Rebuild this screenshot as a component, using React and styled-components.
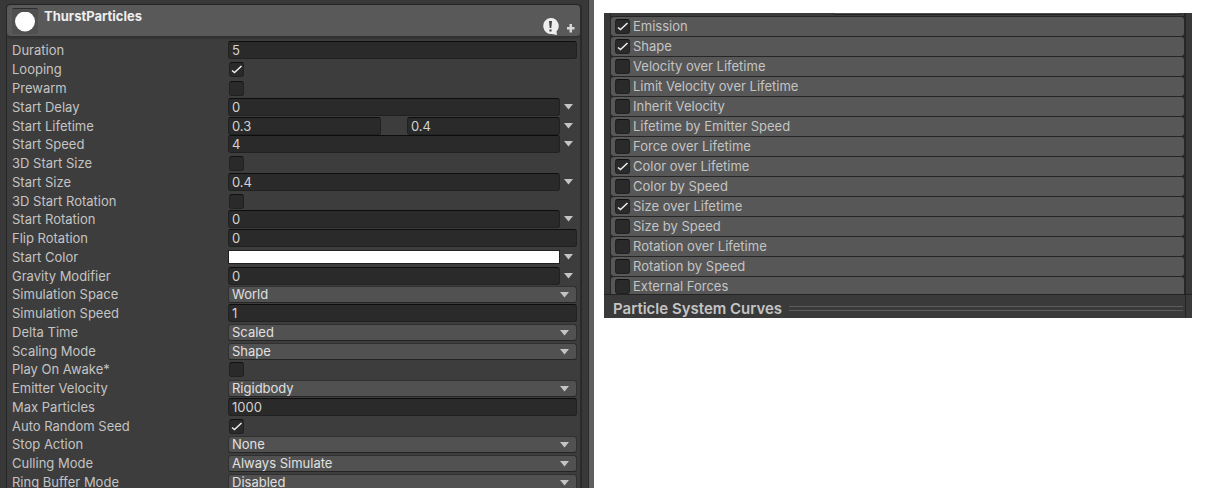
import React from "react";
import styled, { createGlobalStyle } from "styled-components";

const GlobalStyle = createGlobalStyle`
  *, *::before, *::after { box-sizing: border-box; }
  body {
    margin: 0;
    background: #fff;
    color: #c4c4c4;
    font: 400 13px/18px Inter, "Liberation Sans", sans-serif;
    overflow: hidden;
  }
  input, select, button { font: inherit; color: inherit; }
`;

const Page = styled.main`
  display: grid;
  grid-template-columns: minmax(0, 594fr) minmax(0, 588fr);
  gap: 10px;
  align-items: start;
  padding-right: 16px;
  height: 100vh;
`;

const Inspector = styled.section`
  display: flex;
  height: 100vh;
  overflow: hidden;
  padding: 4px 0 0 6px;
  background: #383838;
  border-right: 5px solid #5f5f5f;
`;

const Module = styled.div`
  flex: 1;
  min-width: 0;
  margin-right: 6px;
  border-left: 1px solid #262626;
  border-right: 2px solid #2a2a2a;
  border-radius: 4px 4px 0 0;
  background: #3d3d3d;
`;

const Edge = styled.div`
  width: 1px;
  margin-top: -4px;
  background: #2c2c2c;
`;

const Header = styled.header`
  display: flex;
  height: 33px;
  padding: 3px 5px 0 5px;
  border-top: 1px solid #242424;
  border-bottom: 1px solid #303030;
  border-radius: 4px;
  background: #595959;
  box-shadow: 0 2px 1px #343434;
`;

const Preview = styled.div`
  display: grid;
  place-items: center;
  width: 26px;
  height: 26px;
  border-top: 1px solid #2c2c2c;
  border-radius: 2px;
  background: #505050;
`;

const Title = styled.h1`
  flex: 1;
  margin: 0 0 0 6px;
  color: #eee;
  font-size: 13px;
  font-weight: 700;
  line-height: 16px;
`;

const HeaderActions = styled.div`
  display: flex;
  align-items: flex-end;
  gap: 8px;
  padding-bottom: 1px;
`;

const IconButton = styled.button`
  display: flex;
  padding: 0;
  border: 0;
  background: none;
`;

const Properties = styled.div`
  display: grid;
  grid-template-rows: 19px;
  grid-auto-rows: 19px 19px 19px 18px;
  padding: 4px 3px 0 5px;
`;

const Row = styled.div`
  display: grid;
  grid-template-columns: 216px minmax(0, 1fr);
  align-items: start;
`;

const Label = styled.label`
  white-space: nowrap;
`;

const Control = styled.div`
  display: flex;
  align-items: center;
  height: 18px;
`;

const TextInput = styled.input`
  flex: 1;
  min-width: 0;
  height: 18px;
  padding: 0 3px;
  border: 1px solid #212121;
  border-top-color: #0d0d0d;
  border-radius: 3px;
  outline: 0;
  background: #2a2a2a;
  color: #d2d2d2;
  line-height: 16px;
`;

const RangeGap = styled.span`
  width: 26px;
`;

const ColorInput = styled.input`
  appearance: none;
  flex: 1;
  min-width: 0;
  height: 14px;
  padding: 0;
  border: 1px solid #202020;
  background: #fff;
  &::-webkit-color-swatch-wrapper { padding: 0; }
  &::-webkit-color-swatch { border: 0; border-radius: 0; }
`;

const SelectBox = styled.div`
  display: grid;
  flex: 1;
  min-width: 0;
  align-items: center;
  > * { grid-area: 1 / 1; }
  > svg { justify-self: end; margin: 1px 8px 0 0; pointer-events: none; }
`;

const Select = styled.select`
  appearance: none;
  width: 100%;
  height: 17px;
  padding: 0 3px;
  border: 1px solid #303030;
  border-bottom-color: #242424;
  border-radius: 3px;
  outline: 0;
  background: #515151;
  color: #e0e0e0;
  line-height: 15px;
`;

const MenuButton = styled(IconButton)`
  width: 17px;
  padding-left: 4px;
`;

const CheckBox = styled.span`
  display: grid;
  width: 15px;
  height: 15px;
  margin: 0 1px;
  > * { grid-area: 1 / 1; }
  > svg { pointer-events: none; }
`;

const CheckInput = styled.input`
  appearance: none;
  width: 15px;
  height: 15px;
  margin: 0;
  border: 1px solid #212121;
  border-top-color: #111;
  border-radius: 3px;
  background: #2a2a2a;
`;

const Modules = styled.section`
  margin-top: 13px;
  padding-left: 6px;
  background: #383838;
`;

const ModuleFrame = styled.div`
  margin-right: 6px;
  border-left: 1px solid #262626;
  border-right: 2px solid #262626;
`;

const ListTop = styled.div`
  display: flex;
  justify-content: flex-end;
  height: 3px;
  padding-right: 4px;
  background: #3b3b3b;
`;

const FieldBottom = styled.div`
  width: 61%;
  height: 2px;
  border: solid #242424;
  border-width: 0 1px 1px;
  border-radius: 0 0 3px 3px;
  background: #515151;
`;

const ModuleList = styled.ul`
  display: grid;
  grid-auto-rows: 20px;
  height: 278px;
  margin: 0;
  padding: 0;
  overflow: hidden;
  background: #262626;
  list-style: none;
`;

const ModuleItem = styled.li`
  display: flex;
  align-items: center;
  height: 19px;
  margin-top: 1px;
  padding-left: 3px;
  border-radius: 3px;
  background: #575757;
`;

const ModuleLabel = styled.label`
  margin-left: 2px;
  line-height: 19px;
`;

const CurvesBar = styled.footer`
  display: flex;
  align-items: center;
  gap: 7px;
  height: 24px;
  margin-left: -6px;
  padding-left: 9px;
  border-top: 1px solid #232323;
  background: #3a3a3a;
`;

const CurvesTitle = styled.h2`
  margin: 4px 0 0;
  font-size: 15px;
  font-weight: 600;
  line-height: 19px;
  white-space: nowrap;
`;

const Grip = styled.div`
  flex: 1;
  height: 5px;
  margin: 4px 2px 0 0;
  border-top: 1px solid #5c5c5c;
  border-bottom: 1px solid #5c5c5c;
`;

const CurvesEnd = styled.div`
  align-self: stretch;
  width: 7px;
  margin-left: -7px;
  border-left: 1px solid #262626;
`;

function Arrow() {
  return (
    <svg width="9" height="6" viewBox="0 0 9 6" aria-hidden="true">
      <path d="M0 0H9L4.500 5.500Z" fill="#c4c4c4" />
    </svg>
  );
}

function Check({ id, checked }) {
  return (
    <CheckBox>
      <CheckInput type="checkbox" id={id} defaultChecked={checked} />
      {checked && (
        <svg width="15" height="15" viewBox="0 0 15 15" aria-hidden="true">
          <path d="M3 8.500L5.500 10.500L12.500 4" fill="none" stroke="#eee" strokeWidth="1.500" />
        </svg>
      )}
    </CheckBox>
  );
}

function Menu({ label }) {
  return (
    <MenuButton type="button" aria-label={`${label} mode`}>
      <Arrow />
    </MenuButton>
  );
}

const properties = [
  ["Duration", "text", "5"],
  ["Looping", "check", true],
  ["Prewarm", "check", false],
  ["Start Delay", "curve", "0"],
  ["Start Lifetime", "range", ["0.3", "0.4"]],
  ["Start Speed", "curve", "4"],
  ["3D Start Size", "check", false],
  ["Start Size", "curve", "0.4"],
  ["3D Start Rotation", "check", false],
  ["Start Rotation", "curve", "0"],
  ["Flip Rotation", "text", "0"],
  ["Start Color", "color", "#ffffff"],
  ["Gravity Modifier", "curve", "0"],
  ["Simulation Space", "select", "World"],
  ["Simulation Speed", "text", "1"],
  ["Delta Time", "select", "Scaled"],
  ["Scaling Mode", "select", "Shape"],
  ["Play On Awake*", "check", false],
  ["Emitter Velocity", "select", "Rigidbody"],
  ["Max Particles", "text", "1000"],
  ["Auto Random Seed", "check", true],
  ["Stop Action", "select", "None"],
  ["Culling Mode", "select", "Always Simulate"],
  ["Ring Buffer Mode", "select", "Disabled"],
];

const modules = [
  ["Emission", true],
  ["Shape", true],
  ["Velocity over Lifetime", false],
  ["Limit Velocity over Lifetime", false],
  ["Inherit Velocity", false],
  ["Lifetime by Emitter Speed", false],
  ["Force over Lifetime", false],
  ["Color over Lifetime", true],
  ["Color by Speed", false],
  ["Size over Lifetime", true],
  ["Size by Speed", false],
  ["Rotation over Lifetime", false],
  ["Rotation by Speed", false],
  ["External Forces", false],
];

function Field({ id, label, kind, value }) {
  switch (kind) {
    case "check":
      return <Check id={id} checked={value} />;
    case "select":
      return (
        <SelectBox>
          <Select id={id} defaultValue={value}>
            <option>{value}</option>
          </Select>
          <Arrow />
        </SelectBox>
      );
    case "color":
      return (
        <>
          <ColorInput type="color" id={id} defaultValue={value} />
          <Menu label={label} />
        </>
      );
    case "range":
      return (
        <>
          <TextInput id={id} defaultValue={value[0]} />
          <RangeGap />
          <TextInput aria-label={`${label} maximum`} defaultValue={value[1]} />
          <Menu label={label} />
        </>
      );
    case "curve":
      return (
        <>
          <TextInput id={id} defaultValue={value} />
          <Menu label={label} />
        </>
      );
    default:
      return <TextInput id={id} defaultValue={value} />;
  }
}

const toId = (name) => name.toLowerCase().replace(/[^a-z0-9]+/g, "-");

export default function App() {
  return (
    <>
      <GlobalStyle />
      <Page>
        <Inspector>
          <Module>
            <Header>
              <Preview>
                <svg width="20" height="20" viewBox="0 0 20 20" aria-hidden="true">
                  <circle cx="10" cy="9.500" r="10" fill="#fff" />
                </svg>
              </Preview>
              <Title>ThurstParticles</Title>
              <HeaderActions>
                <IconButton type="button" aria-label="Information">
                  <svg width="17" height="17" viewBox="0 0 17 17">
                    <path d="M8.500 0A8 8 0 1 0 10 16L15 17L14.500 13.500A8 8 0 0 0 8.500 0Z" fill="#eee" />
                    <path d="M7 3H10L9.300 10H7.700ZM7.400 11.500H9.600V13.500H7.400Z" fill="#444" />
                  </svg>
                </IconButton>
                <IconButton type="button" aria-label="Add module">
                  <svg width="8" height="12" viewBox="0 0 8 12">
                    <path d="M2.500 1H5V4H7.500V6.500H5V9.500H2.500V6.500H0V4H2.500Z" fill="#d8d8d8" />
                  </svg>
                </IconButton>
              </HeaderActions>
            </Header>
            <Properties>
              {properties.map(([label, kind, value]) => (
                <Row key={label}>
                  <Label htmlFor={toId(label)}>{label}</Label>
                  <Control>
                    <Field id={toId(label)} label={label} kind={kind} value={value} />
                  </Control>
                </Row>
              ))}
            </Properties>
          </Module>
          <Edge />
        </Inspector>
        <Modules>
          <ModuleFrame>
            <ListTop>
              <FieldBottom />
            </ListTop>
            <ModuleList>
              {modules.map(([label, checked]) => (
                <ModuleItem key={label}>
                  <Check id={toId(label)} checked={checked} />
                  <ModuleLabel htmlFor={toId(label)}>{label}</ModuleLabel>
                </ModuleItem>
              ))}
            </ModuleList>
          </ModuleFrame>
          <CurvesBar>
            <CurvesTitle>Particle System Curves</CurvesTitle>
            <Grip />
            <CurvesEnd />
          </CurvesBar>
        </Modules>
      </Page>
    </>
  );
}
